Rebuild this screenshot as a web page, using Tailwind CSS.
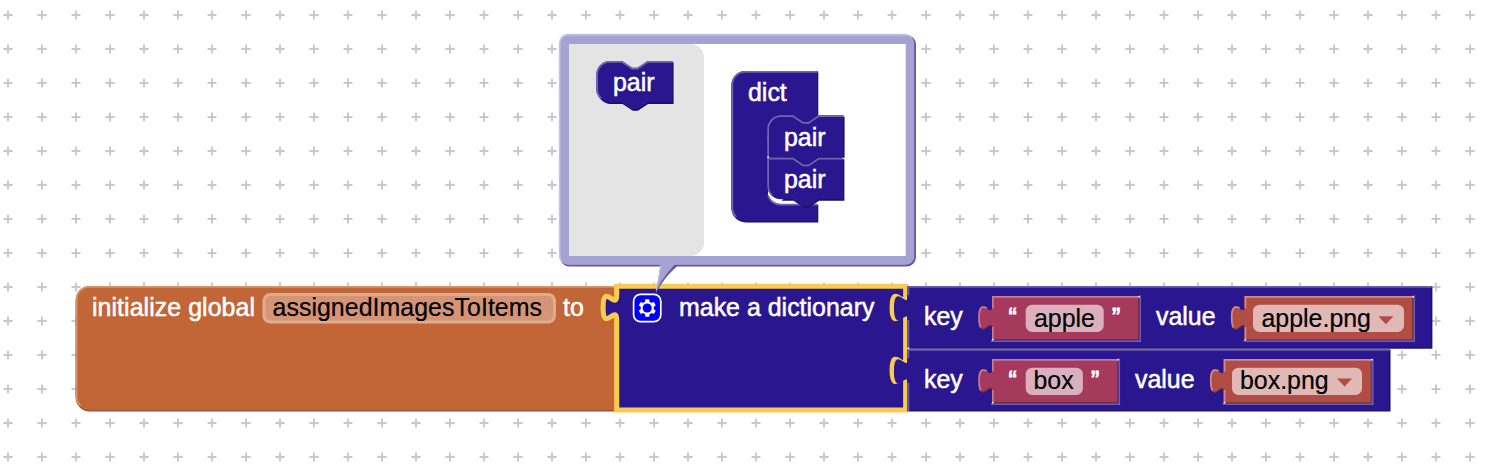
<!DOCTYPE html>
<html lang="en">
<head>
<meta charset="utf-8">
<title>Blocks workspace</title>
<script src="https://cdn.jsdelivr.net/npm/@tailwindcss/browser@4"></script>
</head>
<body class="overflow-hidden bg-white">
<svg class="block h-[476px] w-[1496px] font-['Liberation_Sans',Arial,sans-serif] text-[24.93px]" viewBox="0 0 1496 476">
  <defs>
    <pattern id="grid" x="-9" y="-2" width="34" height="34" patternUnits="userSpaceOnUse">
      <path class="fill-none stroke-[#c8c8c8] stroke-[1.9]" d="M12.500 17h9M17 12.500v9"/>
    </pattern>
    <g id="pair">
      <path class="fill-[#1d0f65]" d="M1.200 15a13.600 13.600 0 0 1 13.600-13.600h12l10.200 6.800h5.100l10.200-6.800h25v41.600H51.800l-10.200 6.800h-5.100l-10.200-6.800h-12A13.600 13.600 0 0 1 1.200 29z"/>
      <path class="fill-[#2a1790]" d="M0 13.600A13.600 13.600 0 0 1 13.600 0h12.200L36 6.800h5.100L51.300 0H76.200v41.500H51.300L41.100 48.300H36l-10.200-6.800H13.600A13.600 13.600 0 0 1 0 27.900z"/>
      <path class="fill-none stroke-[#7065b3] stroke-[1.7]" d="M4.800 37.300A12.700 12.700 0 0 1 .85 27.900V13.600A12.750 12.750 0 0 1 13.600.85h12L35.700 7.600h5.600L51.500.85H76"/>
    </g>
    <g id="tab">
      <path d="M0 34c0-17-13.600 13.600-13.600-12.750s13.600 4.250 13.600-12.750z"/>
    </g>
  </defs>
  <rect class="fill-[url(#grid)]" width="1496" height="476"/>

  <!-- initialize global -->
  <path class="fill-[#9b522d]" d="M75.700 302a15 15 0 0 1 15-15.500H617v125H90a14 14 0 0 1-14.300-14z"/>
  <path class="fill-[#c26638]" d="M75.700 299.600A13.600 13.600 0 0 1 89.300 286H617V410H89.300A13.600 13.600 0 0 1 75.700 396.400z"/>
  <path class="fill-none stroke-[#d4946f] stroke-[1.7]" d="M80.500 405.500A12.700 12.700 0 0 1 76.550 396.400V299.600A12.750 12.750 0 0 1 89.300 286.850H617"/>
  <rect class="fill-[#d59475] stroke-[#e0ab93] stroke-[3]" x="264" y="294.500" width="290.500" height="27.500" rx="6.500"/>
  <g class="fill-white stroke-white stroke-[.5]">
    <text x="92" y="315.800" textLength="163">initialize global</text>
    <text x="563" y="315.800">to</text>
  </g>
  <text class="fill-black stroke-black stroke-[.2]" x="272.500" y="315.800" textLength="269.500">assignedImagesToItems</text>

  <!-- make a dictionary, selected -->
  <path class="fill-[#2a1790] stroke-[#f8cb52] stroke-[5.1]" d="M616.700 286.200H905.700v8.500c0 17-13.600-13.600-13.600 12.750s13.600-4.250 13.600 12.750v37.400c0 17-13.600-13.600-13.600 12.750s13.600-4.250 13.600 12.750V410H616.700V320.200c0-17-13.600 13.600-13.600-12.750s13.600 4.250 13.600-12.750z"/>
  <text class="fill-white stroke-white stroke-[.5]" x="679" y="315.800" textLength="195.500">make a dictionary</text>

  <!-- key/value rows -->
  <g>
    <path class="fill-[#1e1068]" d="M907.500 286.500H1432.400V348.800H907.500z"/>
    <use class="fill-[#2a1790] stroke-[#2a1790] stroke-[1.5]" href="#tab" x="908.300" y="287"/>
    <path class="fill-[#2a1790]" d="M907.500 286H1431V347.500H907.500z"/>
    <path class="fill-none stroke-[#6a5fb0] stroke-[1.7]" d="M908.400 348V320M908.400 295V286.850H1431.500"/>
  </g>
  <g>
    <path class="fill-[#1e1068]" d="M907.500 349.500H1390.500V411.600H907.500z"/>
    <use class="fill-[#2a1790] stroke-[#2a1790] stroke-[1.5]" href="#tab" x="908.300" y="350"/>
    <path class="fill-[#2a1790]" d="M907.500 349H1389V410.300H907.500z"/>
    <path class="fill-none stroke-[#6a5fb0] stroke-[1.7]" d="M908.400 411V383M908.400 358V349.850H1389.500"/>
    <path class="fill-white" d="M907.500 347.600h1.800v1.500h-1.800z"/>
  </g>

  <!-- input sockets: lit lower right edge -->
  <g class="fill-none stroke-[#6a5fb0] stroke-[1.7]">
    <path d="M991 341.200H1140.200V295.300"/>
    <path d="M1243.500 341.200H1414.200V295.300"/>
    <path d="M991 404.200H1119.200V358.300"/>
    <path d="M1222.500 404.200H1372.700V358.300"/>
  </g>
  <!-- text string blocks -->
  <g class="fill-[#782943]">
    <rect x="992" y="296" width="147.300" height="44.300"/><rect x="992" y="359" width="126.300" height="44.300"/>
    <use href="#tab" x="993" y="297.300"/><use href="#tab" x="993" y="360.300"/>
  </g>
  <g class="fill-[#a63a5c]">
    <rect x="992" y="296" width="146" height="43"/><rect x="992" y="359" width="125" height="43"/>
    <use href="#tab" x="992.500" y="296.300"/><use href="#tab" x="992.500" y="359.300"/>
  </g>
  <g class="fill-none stroke-[#c47c94] stroke-[1.7]">
    <path d="M992.850 340v-13M992.850 308.500v-11.650H1138.500M980.700 327.500c-1.800-3-2.500-14.500-.3-18.500 1.600-3 4.500-2 6.600-1"/>
    <path d="M992.850 403v-13M992.850 371.500v-11.650H1117.500M980.700 390.500c-1.800-3-2.500-14.500-.3-18.500 1.600-3 4.500-2 6.600-1"/>
  </g>
  <!-- asset blocks -->
  <g class="fill-[#823833]">
    <rect x="1244.600" y="296" width="168.700" height="44.300"/><rect x="1223.700" y="359" width="148.200" height="44.300"/>
    <use href="#tab" x="1245.700" y="297.300"/><use href="#tab" x="1224.700" y="360.300"/>
  </g>
  <g class="fill-[#b24d46]">
    <rect x="1244.600" y="296" width="167.300" height="43"/><rect x="1223.700" y="359" width="146.900" height="43"/>
    <use href="#tab" x="1245.200" y="296.300"/><use href="#tab" x="1224.200" y="359.300"/>
  </g>
  <g class="fill-none stroke-[#cf8c87] stroke-[1.7]">
    <path d="M1245.450 340v-13M1245.450 308.500v-11.650H1412.500M1233.400 327.500c-1.800-3-2.500-14.500-.3-18.500 1.600-3 4.500-2 6.600-1"/>
    <path d="M1224.550 403v-13M1224.550 371.500v-11.650H1371M1212.400 390.500c-1.800-3-2.500-14.500-.3-18.500 1.600-3 4.500-2 6.600-1"/>
  </g>
  <path class="fill-white" d="M992 339h1.500v1.500H992zM1138.300 296h1.500v1.500h-1.500zM1244.600 339h1.500v1.500h-1.500zM1412.500 296h1.500v1.500h-1.500zM992 402h1.500v1.500H992zM1117.300 359h1.500v1.500h-1.500zM1223.700 402h1.500v1.500h-1.500zM1371 359h1.500v1.500h-1.500z"/>

  <g class="fill-[#dbb0be]">
    <rect x="1025.700" y="304.700" width="78" height="27.300" rx="6.500"/><rect x="1025.700" y="367.700" width="57.200" height="27.300" rx="6.500"/>
  </g>
  <g class="fill-[#e0b8b5]">
    <rect x="1253" y="304.700" width="151" height="27.300" rx="6.500"/><rect x="1232" y="367.700" width="130" height="27.300" rx="6.500"/>
  </g>
  <path class="fill-[#b24d46]" d="M1378.300 316.300h15.200l-7.600 8zM1337 378.600h15.200l-7.600 8z"/>

  <g class="fill-white stroke-white stroke-[.5]">
    <text x="924" y="324.900">key</text><text x="924" y="387.900">key</text>
    <text x="1156" y="324.900">value</text><text x="1135" y="387.900">value</text>
    <g class="stroke-[.8]">
      <text x="1008.500" y="326">“</text><text x="1112" y="326">”</text>
      <text x="1008.500" y="389">“</text><text x="1091" y="389">”</text>
    </g>
  </g>
  <g class="fill-black stroke-black stroke-[.2]">
    <text x="1034" y="326.700">apple</text><text x="1033.500" y="389.300">box</text>
    <text x="1261.500" y="326.700">apple.png</text><text x="1240" y="389.300">box.png</text>
  </g>

  <!-- mutator icon -->
  <g transform="translate(633.600 294.400) scale(1.7)">
    <rect class="fill-[#0000ff] stroke-white stroke-1" width="16" height="16" rx="4"/>
    <path class="fill-white" d="m4.203,7.296 0,1.368 -0.92,0.677 -0.11,0.41 0.9,1.559 0.41,0.11 1.043,-0.457 1.187,0.683 0.127,1.134 0.3,0.3 1.8,0 0.3,-0.299 0.127,-1.138 1.185,-0.682 1.046,0.458 0.409,-0.11 0.9,-1.559 -0.11,-0.41 -0.92,-0.677 0,-1.366 0.92,-0.677 0.11,-0.41 -0.9,-1.559 -0.409,-0.109 -1.046,0.458 -1.185,-0.682 -0.127,-1.138 -0.3,-0.299 -1.8,0 -0.3,0.3 -0.126,1.135 -1.187,0.682 -1.043,-0.457 -0.41,0.11 -0.899,1.559 0.108,0.409z"/>
    <circle class="fill-[#0000ff]" cx="8" cy="8" r="2.700"/>
  </g>

  <!-- mutator bubble -->
  <rect class="fill-[#6257a6]" x="560" y="35" width="356" height="231.600" rx="9.500"/>
  <path class="fill-[#6257a6]" d="M660.500 264C659.500 274 657 287 655.500 294.500C660 284 669 273 678.500 265z"/>
  <rect class="fill-[#c5c1e2]" x="558.800" y="33.800" width="355" height="230.600" rx="9"/>
  <rect class="fill-[#a5a1d3]" x="560.500" y="35.500" width="353.700" height="229" rx="8"/>
  <path class="fill-[#a5a1d3]" d="M660.500 262C659.500 274 657 285 655.800 292.500C659 284 667 272 676.500 263z"/>
  <path class="fill-none stroke-[#c5c1e2] stroke-1" d="M660.700 266C659.500 275 658 283 656.200 290"/>
  <rect class="fill-white" x="569" y="44" width="336.700" height="212"/>
  <path class="fill-[#e4e4e4]" d="M569 44H690.400A13.600 13.600 0 0 1 704 57.600V242.400A13.600 13.600 0 0 1 690.400 256H569z"/>

  <use href="#pair" x="596.300" y="61"/>
  <path class="fill-[#1d0f65]" d="M731.500 86a14 14 0 0 1 14-14.500H818.300V117H768V205H818.300V222.400H745.500a14 14 0 0 1-14-14z"/>
  <path class="fill-[#2a1790]" d="M731.500 84.600A13.600 13.600 0 0 1 745.100 71H817.500V115.300l.8 1-.8 7H781L767.400 130V190.500A13.600 13.600 0 0 0 781 204.100H817.500V221.300H745.100A13.600 13.600 0 0 1 731.500 207.700z"/>
  <path class="fill-none stroke-[#7065b3] stroke-[1.7]" d="M736.300 217A12.700 12.700 0 0 1 732.350 207.700V84.600A12.750 12.750 0 0 1 745.100 71.850H817.500M768 195.500A13.600 13.600 0 0 0 781 204.700H817.500"/>
  <use href="#pair" x="767.300" y="115.300"/>
  <!-- stacked blocks join with square corners -->
  <path class="fill-[#2a1790]" d="M767.300 140h15v34h-15z"/>
  <path class="fill-none stroke-[#7065b3] stroke-[1.7]" d="M768.150 136v44M767.300 158.650H794"/>
  <path class="fill-[#2a1790]" d="M769 159.500h14v16h-14z"/>
  <g transform="translate(767.300 157.800)">
    <path class="fill-[#1d0f65]" d="M60 1.400h17.100v41.600H51.800l-10.200 6.800h-5.100l-10.200-6.800h-12z"/>
    <path class="fill-[#2a1790]" d="M0 0h25.800L36 6.800h5.100L51.300 0H76.200v41.500H51.300L41.100 48.300H36l-10.200-6.800H13.600A13.600 13.600 0 0 1 0 27.900z"/>
    <path class="fill-none stroke-[#7065b3] stroke-[1.7]" d="M4.800 37.300A12.700 12.700 0 0 1 .85 27.900V.85h24.800L35.700 7.600h5.600L51.500.85H76"/>
  </g>
  <path class="fill-white" d="M767.300 156.600h1.600v1.500h-1.600zM842.800 157.800h1.800v1.300h-1.800z"/>
  <g class="fill-white stroke-white stroke-[.5]">
    <text x="613" y="90.900">pair</text>
    <text x="748" y="101">dict</text>
    <text x="784" y="145.800">pair</text>
    <text x="784" y="188">pair</text>
  </g>
</svg>
</body>
</html>
